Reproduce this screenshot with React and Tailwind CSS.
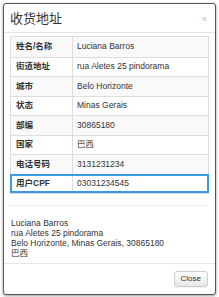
import React from "react";

const rows = [
  ["姓名/名称", "Luciana Barros"],
  ["街道地址", "rua Aletes 25 pindorama"],
  ["城市", "Belo Horizonte"],
  ["状态", "Minas Gerais"],
  ["部编", "30865180"],
  ["国家", "巴西"],
  ["电话号码", "3131231234"],
];

export default function App() {
  return (
    <div
      className="w-[219px] h-[297px] bg-white pt-[3px] pl-[3px] overflow-hidden text-[#333]"
      style={{ fontFamily: '"Liberation Sans", "Noto Sans CJK SC", sans-serif' }}
    >
      <div className="w-[213px] h-[292px] border border-[#555] rounded-[3px] bg-white flex flex-col shadow-[0_1px_3px_rgba(0,0,0,0.4)]">
        <div className="h-[29px] flex items-center justify-between pl-[6px] pr-[8px] border-b border-[#e5e5e5]">
          <span className="text-[13px] leading-none font-normal">收货地址</span>
          <span className="text-[9px] text-[#bbb] leading-none mt-[2px]">×</span>
        </div>
        <div className="px-[6px] pt-[3px]">
          <div className="border border-[#ddd] text-[8.5px]">
            {rows.map(([k, v], i) => (
              <div
                key={k}
                className={`flex h-[19.5px] items-center ${i % 2 === 0 ? "bg-[#f9f9f9]" : "bg-white"} ${i > 0 ? "border-t border-[#ddd]" : ""}`}
              >
                <div className="w-[62px] h-full flex items-center pl-[5px] font-semibold border-r border-[#ddd]">{k}</div>
                <div className="pl-[4px]">{v}</div>
              </div>
            ))}
            <div className="flex h-[19.5px] items-center border-2 border-[#3b9ae0] -mx-px">
              <div className="w-[61px] h-full flex items-center pl-[4px] font-bold border-r border-[#ddd]">用户CPF</div>
              <div className="pl-[4px]">03031234545</div>
            </div>
          </div>
          <div className="h-[12px] border-b border-[#eee]"></div>
          <div className="pt-[12px] text-[8.5px] leading-[10px] pl-px">
            <div>Luciana Barros</div>
            <div>rua Aletes 25 pindorama</div>
            <div>Belo Horizonte, Minas Gerais, 30865180</div>
            <div>巴西</div>
          </div>
        </div>
        <div className="mt-auto h-[31px] border-t border-[#e5e5e5] flex items-center justify-end pr-[7px]">
          <button className="h-[16px] px-[6px] text-[8px] border border-[#ccc] rounded-[3px] bg-gradient-to-b from-white to-[#e6e6e6] shadow-[0_1px_1px_rgba(0,0,0,0.05)] leading-none">
            Close
          </button>
        </div>
      </div>
    </div>
  );
}
